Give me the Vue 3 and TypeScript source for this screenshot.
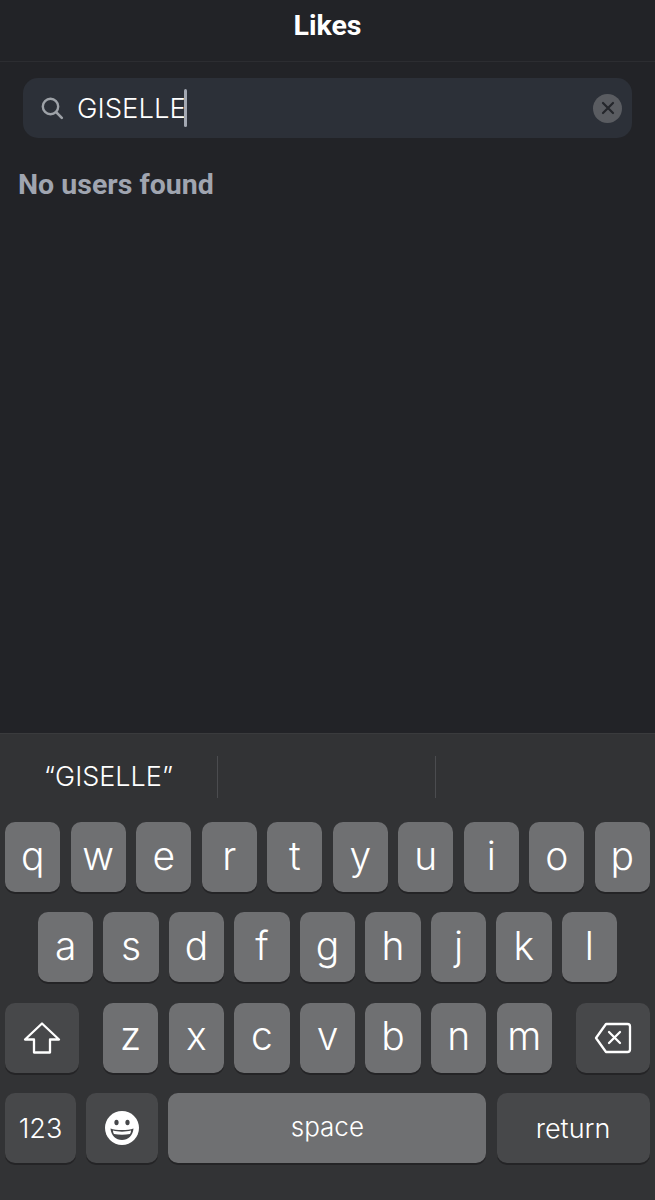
<script setup lang="ts">
const rowOne: string[] = ['q', 'w', 'e', 'r', 't', 'y', 'u', 'i', 'o', 'p']
const rowTwo: string[] = ['a', 's', 'd', 'f', 'g', 'h', 'j', 'k', 'l']
const rowThree: string[] = ['z', 'x', 'c', 'v', 'b', 'n', 'm']
</script>

<template>
	<div class="screen">
		<header class="header">Likes</header>

		<div class="search">
			<svg class="search__icon" width="24" height="24" viewBox="0 0 24 24" fill="none">
				<circle cx="10.5" cy="10.5" r="7.7" stroke="#9ea2a8" stroke-width="2.4" />
				<path d="M16.4 16.4l5.4 5.4" stroke="#9ea2a8" stroke-width="2.6" stroke-linecap="round" />
			</svg>
			<span class="search__text">GISELLE</span>
			<span class="search__caret"></span>
			<span class="search__clear">
				<svg width="14" height="14" viewBox="0 0 14 14" fill="none">
					<path d="M2 2l10 10M12 2L2 12" stroke="#24262b" stroke-width="2.2" stroke-linecap="round" />
				</svg>
			</span>
		</div>

		<p class="empty">No users found</p>

		<div class="keyboard">
			<div class="suggestions">
				<div class="suggestions__item">“GISELLE”</div>
				<div class="suggestions__item"></div>
				<div class="suggestions__item"></div>
			</div>

			<div class="row">
				<div v-for="k in rowOne" :key="k" class="key">{{ k }}</div>
			</div>
			<div class="row row--inset">
				<div v-for="k in rowTwo" :key="k" class="key">{{ k }}</div>
			</div>
			<div class="row row--three">
				<div class="key key--dark key--wide">
					<svg width="38" height="34" viewBox="0 0 38 34" fill="none">
						<path
							d="M19 2.5L36 18.5H27V31.5H11V18.5H2Z"
							stroke="#fff"
							stroke-width="2.3"
							stroke-linejoin="round"
						/>
					</svg>
				</div>
				<div class="row__letters">
					<div v-for="k in rowThree" :key="k" class="key">{{ k }}</div>
				</div>
				<div class="key key--dark key--wide">
					<svg width="38" height="32" viewBox="0 0 38 32" fill="none">
						<path
							d="M12 2H33.5A2.5 2.5 0 0 1 36 4.5V27.5A2.5 2.5 0 0 1 33.5 30H12L2 16Z"
							stroke="#fff"
							stroke-width="2.3"
							stroke-linejoin="round"
						/>
						<path d="M15 10l11 11M26 10L15 21" stroke="#fff" stroke-width="2.3" stroke-linecap="round" />
					</svg>
				</div>
			</div>
			<div class="row row--bottom">
				<div class="key key--dark key--label key--num">123</div>
				<div class="key key--dark key--emoji">
					<svg width="34" height="34" viewBox="0 0 34 34">
						<circle cx="17" cy="17" r="17" fill="#fff" />
						<ellipse cx="11.5" cy="11.5" rx="2.1" ry="2.8" fill="#46474a" />
						<ellipse cx="22.5" cy="11.5" rx="2.1" ry="2.8" fill="#46474a" />
						<path d="M5.5 17.5C11 19.5 23 19.5 28.5 17.5C28 24.5 23 29 17 29C11 29 6 24.5 5.5 17.5Z" fill="#46474a" />
						<path d="M8 19.5C13 21 21 21 26 19.5C26 21 25.6 22 25 23C20 24 14 24 9 23C8.4 22 8 21 8 19.5Z" fill="#fff" />
					</svg>
				</div>
				<div class="key key--space key--label">space</div>
				<div class="key key--dark key--return key--label">return</div>
			</div>
		</div>
	</div>
</template>

<style>
html,
body {
	margin: 0;
	background: #222327;
}
</style>

<style scoped>
.screen {
	width: 655px;
	height: 1200px;
	display: flex;
	flex-direction: column;
	background: #222327;
	font-family: Inter, 'Liberation Sans', sans-serif;
	overflow: hidden;
}

.header {
	height: 62px;
	box-sizing: border-box;
	display: flex;
	align-items: center;
	justify-content: center;
	padding-bottom: 11px;
	border-bottom: 1px solid #2c2d31;
	color: #fff;
	font-family: Roboto, sans-serif;
	font-weight: 700;
	font-size: 28.5px;
}

.search {
	margin: 16px 23px 0;
	height: 60px;
	display: flex;
	align-items: center;
	padding: 0 10px 0 17px;
	border-radius: 15px;
	background: #2c3038;
}

.search__icon {
	flex: none;
	margin-right: 13px;
}

.search__text {
	color: #fff;
	font-size: 27.5px;
	font-weight: 300;
}

.search__caret {
	width: 3px;
	height: 38px;
	margin-left: -2px;
	border-radius: 2px;
	background: #a3a8b2;
}

.search__clear {
	margin-left: auto;
	width: 29px;
	height: 29px;
	border-radius: 50%;
	display: flex;
	align-items: center;
	justify-content: center;
	background: #5a5c61;
}

.empty {
	margin: 30px 0 0 18px;
	color: #a0a5b0;
	font-family: Roboto, sans-serif;
	font-weight: 700;
	font-size: 28.5px;
	line-height: 34px;
}

.keyboard {
	margin-top: auto;
	height: 467px;
	box-sizing: border-box;
	border-top: 1px solid #3a3b3d;
	padding: 0 5px;
	background: #323335;
}

.suggestions {
	height: 88px;
	margin: 0 -5px;
	display: flex;
}

.suggestions__item {
	width: 218px;
	height: 42px;
	margin-top: 22px;
	padding-bottom: 2px;
	box-sizing: border-box;
	display: flex;
	align-items: center;
	justify-content: center;
	border-right: 1px solid #4b4c4f;
	color: #fff;
	font-size: 27px;
	font-weight: 300;
}

.suggestions__item:last-child {
	border-right: none;
}

.row {
	height: 70px;
	margin-bottom: 20.4px;
	display: flex;
	gap: 10.2px;
}

.row--inset {
	padding: 0 33px;
}

.row--three {
	justify-content: space-between;
}

.row__letters {
	display: flex;
	gap: 10.2px;
	width: 449px;
}

.key {
	flex: 1;
	min-width: 0;
	display: flex;
	align-items: center;
	justify-content: center;
	padding-bottom: 4px;
	box-sizing: border-box;
	border-radius: 10px;
	background: #6f7072;
	box-shadow: 0 2px 0 #242426;
	color: #fff;
	font-size: 39px;
	font-weight: 300;
}

.key--dark {
	background: #47484a;
}

.key--wide {
	flex: none;
	width: 74px;
	padding-bottom: 0;
}

.key--label {
	font-size: 27px;
	padding-bottom: 0;
}

.key--num {
	flex: none;
	width: 71px;
}

.key--emoji {
	flex: none;
	width: 72px;
	padding-bottom: 0;
}

.key--space {
	flex: none;
	width: 318px;
	padding-bottom: 4px;
	font-size: 26px;
}

.key--return {
	flex: none;
	width: 153px;
}
</style>
